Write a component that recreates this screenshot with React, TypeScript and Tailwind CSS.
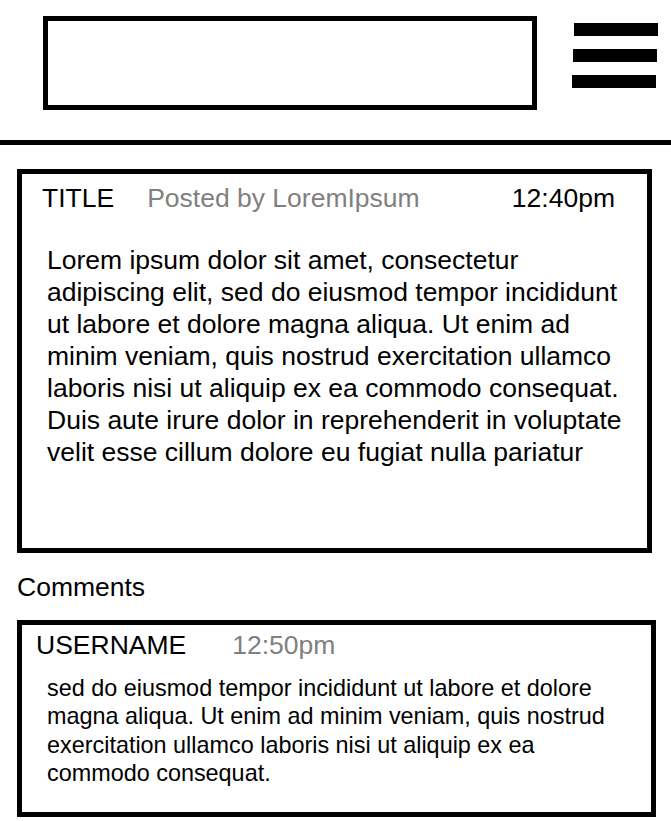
import React from 'react';

const PostPage: React.FC = () => {
  return (
    <div className="w-[671px] h-[821px] overflow-hidden bg-white text-black font-['Liberation_Sans',Arial,sans-serif]">
      {/* Header */}
      <header className="flex items-start h-[140px]">
        <div className="ml-[43px] mt-[16px] w-[494px] h-[94px] border-[5px] border-black" />
        <div className="ml-[35px] mt-[23px] flex flex-col gap-[13px] w-[86px]">
          <div className="ml-[2px] w-[84px] h-[13px] bg-black" />
          <div className="ml-[1px] w-[84px] h-[13px] bg-black" />
          <div className="w-[84px] h-[13px] bg-black" />
        </div>
      </header>
      <div className="h-[5px] bg-black" />

      {/* Content */}
      <main className="px-[17px] pt-[24px]">
        {/* Post */}
        <section className="w-[635px] h-[384px] border-[5px] border-black pt-[9px] pl-[20px] pr-[15px]">
          <div className="flex items-center text-[26.5px] leading-[30px] pr-[17px]">
            <span>TITLE</span>
            <span className="ml-[33px] text-[#808080]">Posted by LoremIpsum</span>
            <span className="ml-auto">12:40pm</span>
          </div>
          <p className="mt-[31px] pl-[5px] text-[26.5px] leading-[32px]">
            Lorem ipsum dolor sit amet, consectetur adipiscing elit, sed do eiusmod tempor
            incididunt ut labore et dolore magna aliqua. Ut enim ad minim veniam, quis nostrud
            exercitation ullamco laboris nisi ut aliquip ex ea commodo consequat. Duis aute irure
            dolor in reprehenderit in voluptate velit esse cillum dolore eu fugiat nulla pariatur
          </p>
        </section>

        <h2 className="mt-[19px] text-[26.5px] leading-[30px]">Comments</h2>

        {/* Comment */}
        <section className="mt-[18px] w-[639px] h-[197px] border-[5px] border-black pt-[5px] pl-[14px] pr-[26px]">
          <div className="flex items-center text-[26.5px] leading-[30px]">
            <span>USERNAME</span>
            <span className="ml-[46px] text-[#808080]">12:50pm</span>
          </div>
          <p className="mt-[14px] pl-[11px] text-[23.4px] leading-[28.4px]">
            sed do eiusmod tempor incididunt ut labore et dolore magna aliqua. Ut enim ad minim
            veniam, quis nostrud exercitation ullamco laboris nisi ut aliquip ex ea commodo
            consequat.
          </p>
        </section>
      </main>
    </div>
  );
};

export default PostPage;
